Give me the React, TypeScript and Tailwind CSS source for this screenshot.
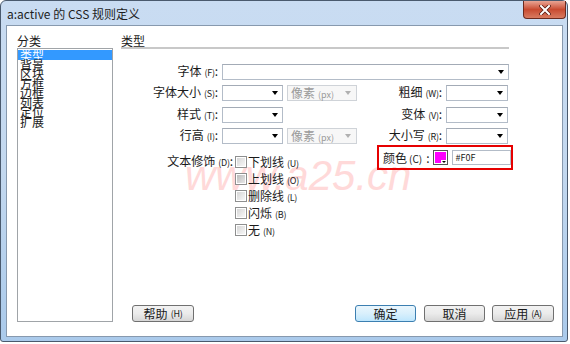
import React from 'react';

const FONT = "font-['Noto_Sans_CJK_SC','Noto_Sans',sans-serif]";

const Key = ({ k }: { k: string }) => (
  <span className="text-[9px] ml-[3px] tracking-[-0.3px]">({k})</span>
);

const Label = ({ text, k, className = '' }: { text: string; k: string; className?: string }) => (
  <div className={`text-right text-[12px] leading-[16px] whitespace-nowrap text-[#1a1a1a] ${className}`}>
    {text}
    <Key k={k} />:
  </div>
);

const Arrow = ({ disabled = false }: { disabled?: boolean }) => (
  <div
    className={`w-0 h-0 border-l-[3.5px] border-r-[3.5px] border-t-[4px] border-l-transparent border-r-transparent ${
      disabled ? 'border-t-[#b0b0b0]' : 'border-t-black'
    }`}
  />
);

const Select = ({ className = '' }: { className?: string }) => (
  <div
    className={`ml-[4px] h-[16px] border border-[#b3bcc8] border-t-[#a3abb6] bg-white flex items-center justify-end pr-[4px] ${className}`}
  >
    <Arrow />
  </div>
);

const UnitSelect = () => (
  <div className="ml-[4px] w-[70px] h-[16px] border border-[#cfd3d8] bg-[#f7f7f7] flex items-center justify-between pl-[3px] pr-[5px] text-[#9a9a9a]">
    <span className="text-[12px] leading-none whitespace-nowrap">
      像素<span className="text-[9px] ml-[3px]">(px)</span>
    </span>
    <Arrow disabled />
  </div>
);

const Checkbox = ({ label, k, active = false }: { label: string; k: string; active?: boolean }) => (
  <div className="h-[17px] flex items-center">
    <div className="w-[12px] h-[12px] border border-[#8e8f8f] bg-white p-[1px]">
      <div
        className={`w-full h-full bg-gradient-to-br ${
          active ? 'from-[#bdbdbd] to-[#e6e6e6]' : 'from-[#d6d6d6] to-[#f7f7f7]'
        }`}
      />
    </div>
    <span className="ml-[1px] text-[12px] leading-none whitespace-nowrap text-[#1a1a1a]">
      {label}
      <Key k={k} />
    </span>
  </div>
);

const Button = ({
  children,
  className = '',
  primary = false,
}: {
  children: React.ReactNode;
  className?: string;
  primary?: boolean;
}) => (
  <div
    className={`h-[17px] rounded-[3px] border flex items-center justify-center text-[12px] leading-none text-[#1a1a1a] ${
      primary
        ? 'border-[#3c7fb1] bg-gradient-to-b from-[#eaf6fd] via-[#d9f0fc] to-[#bee6fd]'
        : 'border-[#707070] bg-gradient-to-b from-[#f2f2f2] via-[#ebebeb] to-[#d6d6d6]'
    } ${className}`}
  >
    {children}
  </div>
);

const CATEGORIES = ['类型', '背景', '区块', '方框', '边框', '列表', '定位', '扩展'];

export default function App() {
  return (
    <div className={`w-[570px] h-[344px] bg-white ${FONT}`}>
      <div className="w-[568px] h-[342px] rounded-t-[6px] rounded-b-[3px] border border-[#4a5a6e] bg-gradient-to-b from-[#c9dcf2] via-[#c3d8ef] to-[#aacaeb] flex flex-col">
        {/* Title bar */}
        <div className="h-[24px] relative flex items-center pl-[6px] pt-[1px]">
          <span className="text-[12px] leading-none text-[#1e1e1e]">a:active 的 CSS 规则定义</span>
          <div className="absolute top-0 right-[1px] w-[43px] h-[18px] rounded-b-[4px] border border-t-0 border-[#6b2a1e] bg-gradient-to-b from-[#e8a494] via-[#c84a30] to-[#d87a60] flex items-center justify-center">
            <svg width="12" height="10" viewBox="0 0 12 10">
              <path d="M2 1 L10 9 M10 1 L2 9" stroke="#5a1a10" strokeWidth="3.6" strokeLinecap="square" />
              <path d="M2 1 L10 9 M10 1 L2 9" stroke="#ffffff" strokeWidth="2" strokeLinecap="square" />
            </svg>
          </div>
        </div>

        {/* Body */}
        <div className="flex-1 ml-[5px] mr-[4px] mb-[4px] bg-white border border-[#8799ae] relative flex pt-[8px] pb-[14px]">
          {/* Watermark (behind the form) */}
          <div className="absolute left-[178px] top-[128px] text-[42px] leading-[43px] italic font-['Liberation_Sans',sans-serif] text-[#ffd9d9] pointer-events-none whitespace-nowrap">
            www.a25.cn
          </div>

          {/* Left: categories */}
          <div className="relative pl-[10px] w-[106px] flex flex-col">
            <div className="text-[12px] leading-[14px] text-[#1a1a1a]">分类</div>
            <div className="flex-1 border border-[#a0a4a8] pt-[1px]">
              {CATEGORIES.map((c, i) => (
                <div
                  key={c}
                  className={`text-[12px] leading-[9.5px] h-[9.5px] pl-[2px] ${
                    i === 0 ? 'bg-[#3399ff] text-white' : 'text-[#1a1a1a]'
                  }`}
                >
                  {c}
                </div>
              ))}
            </div>
          </div>

          {/* Right: form */}
          <div className="relative ml-[8px] flex-1 flex flex-col">
            <div className="w-[388px] text-[12px] leading-[13px] border-b-2 border-[#c8c8c8] text-[#1a1a1a]">类型</div>

            <div className="mt-[15px] flex items-center h-[16px]">
              <Label text="字体" k="F" className="w-[97px]" />
              <Select className="w-[287px]" />
            </div>

            <div className="mt-[5px] flex items-center h-[16px]">
              <Label text="字体大小" k="S" className="w-[97px]" />
              <Select className="w-[61px]" />
              <UnitSelect />
              <Label text="粗细" k="W" className="w-[85px]" />
              <Select className="w-[62px]" />
            </div>

            <div className="mt-[6px] flex items-center h-[16px]">
              <Label text="样式" k="T" className="w-[97px]" />
              <Select className="w-[61px]" />
              <div className="w-[74px]" />
              <Label text="变体" k="V" className="w-[85px]" />
              <Select className="w-[62px]" />
            </div>

            <div className="mt-[5px] flex items-center h-[16px]">
              <Label text="行高" k="I" className="w-[97px]" />
              <Select className="w-[61px]" />
              <UnitSelect />
              <Label text="大小写" k="R" className="w-[85px]" />
              <Select className="w-[62px]" />
            </div>

            <div className="mt-[1px] flex items-start">
              <div className="w-[256px] pt-[8px] flex items-start">
                <div className="w-[112px] h-[17px] flex items-center justify-end">
                  <Label text="文本修饰" k="D" />
                </div>
                <div className="ml-[2px] flex flex-col">
                  <Checkbox label="下划线" k="U" />
                  <Checkbox label="上划线" k="O" active />
                  <Checkbox label="删除线" k="L" />
                  <Checkbox label="闪烁" k="B" />
                  <Checkbox label="无" k="N" />
                </div>
              </div>

              <div className="w-[136px] h-[25px] border-2 border-[#e60000] flex items-center pl-[4px]">
                <span className="text-[12px] leading-none whitespace-nowrap text-[#1a1a1a]">
                  颜色<span className="text-[10px] ml-[2px]">(C)</span>
                  <span className="ml-[4px]">:</span>
                </span>
                <div className="ml-[3px] w-[15px] h-[15px] border border-[#555] bg-white p-[1px] relative">
                  <div className="w-full h-full bg-[#ff00ff]" />
                  <div className="absolute bottom-0 right-0 w-[6px] h-[4px] bg-white flex items-center justify-center">
                    <div className="w-0 h-0 border-l-[2px] border-r-[2px] border-t-[2px] border-l-transparent border-r-transparent border-t-black" />
                  </div>
                </div>
                <div className="ml-[4px] w-[59px] h-[15px] border border-[#b3bcc8] bg-white flex items-center pl-[3px] text-[9px] leading-none text-[#1a1a1a]">
                  #F0F
                </div>
              </div>
            </div>

            <div className="mt-auto flex items-center pl-[11px] pr-[8px]">
              <Button className="w-[62px]">
                帮助
                <Key k="H" />
              </Button>
              <div className="flex-1" />
              <Button className="w-[61px]" primary>
                确定
              </Button>
              <Button className="w-[61px] ml-[8px]">取消</Button>
              <Button className="w-[62px] ml-[7px]">
                应用
                <Key k="A" />
              </Button>
            </div>
          </div>
        </div>
      </div>
    </div>
  );
}
